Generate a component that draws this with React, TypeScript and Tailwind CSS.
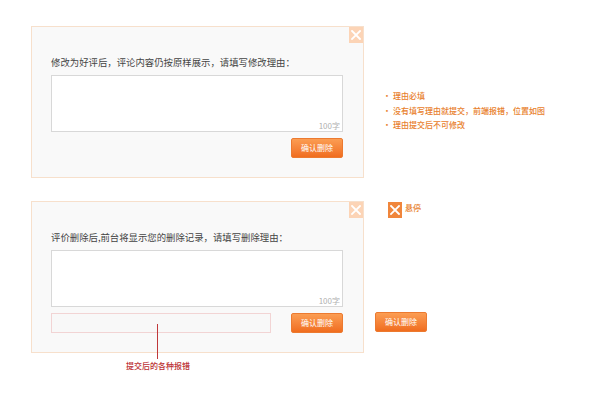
import React from "react";

const font = { fontFamily: '"Noto Sans CJK SC", "Noto Sans", sans-serif' };

function CloseBox({ dark }: { dark?: boolean }) {
  return (
    <div
      className={
        "flex items-center justify-center w-[14px] h-[16px] " +
        (dark ? "bg-[#f0863c]" : "bg-[#fcd4b6]")
      }
    >
      <svg width="10" height="10" viewBox="0 0 10 10">
        <path d="M1 1 L9 9 M9 1 L1 9" stroke="#ffffff" strokeWidth="1.8" strokeLinecap="square" />
      </svg>
    </div>
  );
}

function OrangeButton() {
  return (
    <div className="w-[52px] h-[20px] rounded-[2px] bg-gradient-to-b from-[#fb9d52] to-[#f06d1e] flex items-center justify-center text-[8px] leading-none text-white border border-[#ec7a30]">
      确认删除
    </div>
  );
}

function Panel({
  text,
  withError,
}: {
  text: string;
  withError?: boolean;
}) {
  return (
    <div className="relative w-[333px] h-[152px] border border-[#f7e0cc] bg-[#f9f9f9] pl-[19px] pr-[19px] pt-[27px]">
      <div className="absolute top-0 right-0">
        <CloseBox />
      </div>
      <div className="h-[18px] flex items-center text-[9.4px] leading-none text-[#444] tracking-[0px]">{text}</div>
      <div className="mt-[3px] relative w-[292px] h-[57px] bg-white border border-[#d8d8d8]">
        <span className="absolute right-[2px] bottom-[1px] text-[8px] leading-none text-[#b0b0b0]">100字</span>
      </div>
      <div className="mt-[6px] flex items-center justify-between w-[292px]">
        {withError ? (
          <div className="relative w-[220px] h-[20px] border border-[#f2d4d4] bg-[#f8f8f8]">
            <div className="absolute left-[105px] top-[10px] w-px h-[35px] bg-[#c0383a]" />
            <div className="absolute left-[74px] top-[48px] whitespace-nowrap text-[8px] leading-none font-medium text-[#bb2f33]">
              提交后的各种报错
            </div>
          </div>
        ) : (
          <div />
        )}
        <OrangeButton />
      </div>
    </div>
  );
}

export default function App() {
  return (
    <div className="w-[600px] h-[395px] bg-white pt-[26px] pl-[31px] overflow-hidden" style={font}>
      <div className="flex items-start">
        <Panel text="修改为好评后，评论内容仍按原样展示，请填写修改理由：" />
        <div className="ml-[19px] mt-[63px] text-[8px] leading-[14.5px] font-medium text-[#e8802c]">
          <div className="flex"><span className="w-[10px]">·</span>理由必填</div>
          <div className="flex"><span className="w-[10px]">·</span>没有填写理由就提交，前端报错，位置如图</div>
          <div className="flex"><span className="w-[10px]">·</span>理由提交后不可修改</div>
        </div>
      </div>
      <div className="mt-[23px] flex items-start">
        <Panel text="评价删除后,前台将显示您的删除记录，请填写删除理由：" withError />
        <div className="ml-[11px] flex flex-col">
          <div className="ml-[13px] mt-[1px] flex items-start">
            <CloseBox dark />
            <span className="ml-[3px] text-[8px] leading-[12px] font-medium text-[#e8802c]">悬停</span>
          </div>
          <div className="mt-[94px]">
            <OrangeButton />
          </div>
        </div>
      </div>
    </div>
  );
}
